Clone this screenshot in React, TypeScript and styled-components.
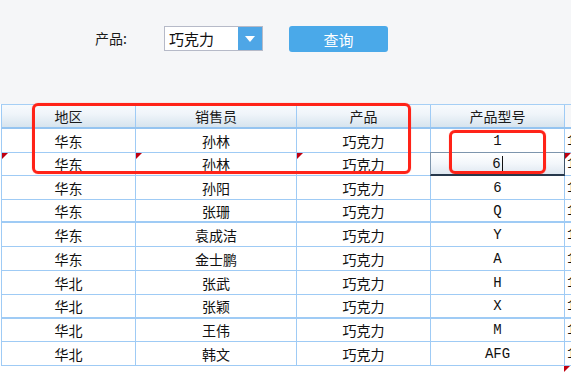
import React from 'react'
import styled, { createGlobalStyle } from 'styled-components'

const GlobalStyle = createGlobalStyle`
  html, body {
    margin: 0;
    padding: 0;
    background: #ffffff;
  }
  body {
    font-family: "Noto Sans CJK SC", "Liberation Sans", sans-serif;
    color: #111;
  }
`

const Page = styled.div`
  width: 571px;
  height: 389px;
  overflow: hidden;
  background: #ffffff;
`

const QueryBar = styled.div`
  height: 104px;
  box-sizing: border-box;
  padding: 26px 0 0 95px;
  background: #f5f6f8;
  display: flex;
  align-items: flex-start;
`

const Label = styled.div`
  width: 69px;
  height: 25px;
  line-height: 25px;
  font-size: 14px;
  color: #1a1a1a;
`

const Select = styled.div`
  width: 99px;
  height: 25px;
  box-sizing: border-box;
  border: 1px solid #b6bac8;
  background: #fff;
  display: flex;
`

const SelectText = styled.div`
  flex: 1;
  padding-left: 4px;
  line-height: 23px;
  font-size: 15px;
  color: #111;
`

const SelectArrow = styled.div`
  width: 24px;
  background: #4ea6e6;
  display: flex;
  align-items: center;
  justify-content: center;
`

const QueryButton = styled.button`
  margin-left: 26px;
  width: 99px;
  height: 26px;
  border: none;
  border-radius: 3px;
  background: #4aa9e9;
  color: #fff;
  font-family: "Noto Sans CJK SC", sans-serif;
  font-size: 15px;
  padding: 0;
`

const Sheet = styled.div`
  position: relative;
  margin-left: 1px;
`

const Row = styled.div<{ $h: number; $thick?: boolean }>`
  display: grid;
  grid-template-columns: 134px 161px 134px 134px 1fr;
  height: ${p => p.$h}px;
  box-sizing: border-box;
  border-left: 1px solid #9fcbf5;
  border-bottom: ${p => (p.$thick ? 2 : 1)}px solid #9fcbf5;
`

const HeaderRow = styled(Row)`
  border-top: 1px solid #a6cff5;
  border-bottom: 2px solid #95c4f0;
`

const Cell = styled.div<{ $mono?: boolean }>`
  position: relative;
  border-right: 1px solid #9fcbf5;
  display: flex;
  align-items: center;
  justify-content: center;
  font-size: 14px;
  font-family: ${p =>
    p.$mono ? '"Liberation Mono", "DejaVu Sans Mono", monospace' : '"Noto Sans CJK SC", sans-serif'};
  color: #111;
  background: #fff;
`

const HeadCell = styled(Cell)`
  background: linear-gradient(#f7fafd, #f0f5fa 40%, #d7e4ee);
  color: #1a1a1a;
`

const EditCell = styled(Cell)`
  border: 1px solid #7d95ad;
  border-bottom: 2px solid #26384c;
  border-right: 1px solid #3e536a;
  margin: -1px 0 -1px -1px;
  background: linear-gradient(#ffffff, #f3f7fb 50%, #dfe8f1);
`

const Caret = styled.span`
  display: inline-block;
  width: 1px;
  height: 15px;
  background: #111;
  margin-left: 1px;
`

const Overflow = styled.div`
  position: relative;
  display: flex;
  align-items: center;
  padding-left: 2px;
  font-family: "Liberation Mono", monospace;
  font-size: 14px;
  color: #111;
  overflow: hidden;
  background: #fff;
`

const HeadGap = styled.div`
  background: #f5f6f8;
`

const Flag = styled.span<{ $x?: number; $y?: number }>`
  position: absolute;
  left: ${p => p.$x ?? 0}px;
  top: ${p => p.$y ?? 0}px;
  width: 0;
  height: 0;
  border-top: 6px solid #c00010;
  border-right: 6px solid transparent;
`

const Mark = styled.div<{ $x: number; $y: number; $w: number; $h: number }>`
  position: absolute;
  left: ${p => p.$x}px;
  top: ${p => p.$y}px;
  width: ${p => p.$w}px;
  height: ${p => p.$h}px;
  box-sizing: border-box;
  border: 3px solid #ff2318;
  border-radius: 6px;
  box-shadow: 0 0 1px rgba(255, 40, 30, 0.6);
  pointer-events: none;
`

type Rec = { area: string; seller: string; product: string; model: string; h: number; thick?: boolean }

const rows: Rec[] = [
  { area: '华东', seller: '孙林', product: '巧克力', model: '1', h: 24 },
  { area: '华东', seller: '孙林', product: '巧克力', model: '6', h: 23 },
  { area: '华东', seller: '孙阳', product: '巧克力', model: '6', h: 24 },
  { area: '华东', seller: '张珊', product: '巧克力', model: 'Q', h: 23, thick: true },
  { area: '华东', seller: '袁成洁', product: '巧克力', model: 'Y', h: 24 },
  { area: '华东', seller: '金士鹏', product: '巧克力', model: 'A', h: 24 },
  { area: '华北', seller: '张武', product: '巧克力', model: 'H', h: 24 },
  { area: '华北', seller: '张颖', product: '巧克力', model: 'X', h: 24, thick: true },
  { area: '华北', seller: '王伟', product: '巧克力', model: 'M', h: 23 },
  { area: '华北', seller: '韩文', product: '巧克力', model: 'AFG', h: 24 },
]

const App = () => {
  return (
    <Page>
      <GlobalStyle />
      <QueryBar>
        <Label>产品:</Label>
        <Select>
          <SelectText>巧克力</SelectText>
          <SelectArrow>
            <svg width="10" height="6" viewBox="0 0 10 6">
              <path d="M0 0 L10 0 L5 6 Z" fill="#fff" />
            </svg>
          </SelectArrow>
        </Select>
        <QueryButton>查询</QueryButton>
      </QueryBar>

      <Sheet>
        <HeaderRow $h={25}>
          <HeadCell>地区</HeadCell>
          <HeadCell>销售员</HeadCell>
          <HeadCell>产品</HeadCell>
          <HeadCell>产品型号</HeadCell>
          <HeadGap />
        </HeaderRow>
        {rows.map((r, i) => {
          const editing = i === 1
          return (
            <Row key={i} $h={r.h} $thick={r.thick}>
              <Cell>
                {editing && <Flag />}
                {r.area}
              </Cell>
              <Cell>
                {editing && <Flag />}
                {r.seller}
              </Cell>
              <Cell>
                {editing && <Flag />}
                {r.product}
              </Cell>
              {editing ? (
                <EditCell $mono>
                  {r.model}
                  <Caret />
                </EditCell>
              ) : (
                <Cell $mono>{r.model}</Cell>
              )}
              <Overflow>
                {editing && <Flag />}
                1
              </Overflow>
            </Row>
          )
        })}
        <Flag $x={563} $y={262} />
        <Mark $x={31} $y={-1} $w={379} $h={71} />
        <Mark $x={448} $y={26} $w={97} $h={44} />
      </Sheet>
    </Page>
  )
}

export default App
